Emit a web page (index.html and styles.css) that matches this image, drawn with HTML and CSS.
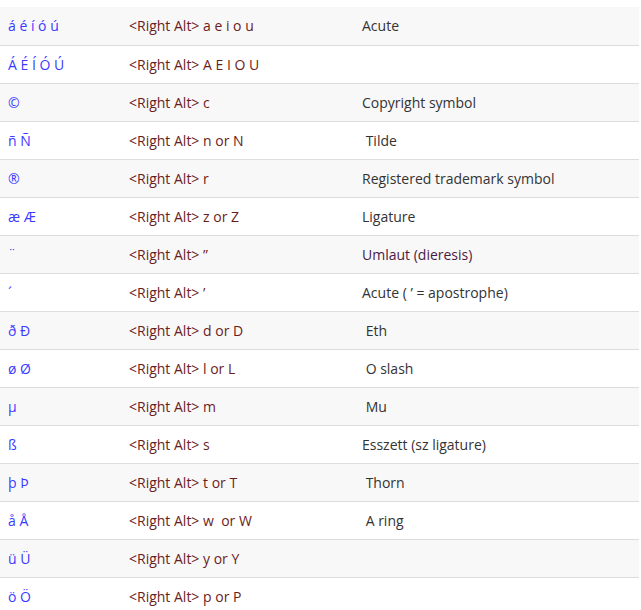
FILE: index.html
```html
<!DOCTYPE html>
<html>
<head>
<meta charset="utf-8">
<link rel="stylesheet" href="styles.css">
</head>
<body>
<div class="wrap">
<table class="keys">
<tbody>
<tr><td class="ch">á é í ó ú</td><td class="combo">&lt;Right Alt&gt; a e i o u</td><td class="desc">Acute</td></tr>
<tr><td class="ch">Á É Í Ó Ú</td><td class="combo">&lt;Right Alt&gt; A E I O U</td><td class="desc"></td></tr>
<tr><td class="ch">©</td><td class="combo">&lt;Right Alt&gt; c</td><td class="desc">Copyright symbol</td></tr>
<tr><td class="ch">ñ Ñ</td><td class="combo">&lt;Right Alt&gt; n or N</td><td class="desc"> Tilde</td></tr>
<tr><td class="ch">®</td><td class="combo">&lt;Right Alt&gt; r</td><td class="desc">Registered trademark symbol</td></tr>
<tr><td class="ch">æ Æ</td><td class="combo">&lt;Right Alt&gt; z or Z</td><td class="desc">Ligature</td></tr>
<tr><td class="ch">¨</td><td class="combo">&lt;Right Alt&gt; ”</td><td class="desc purple">Umlaut (dieresis)</td></tr>
<tr><td class="ch">´</td><td class="combo">&lt;Right Alt&gt; ’</td><td class="desc">Acute ( ’ = apostrophe)</td></tr>
<tr><td class="ch">ð Ð</td><td class="combo">&lt;Right Alt&gt; d or D</td><td class="desc"> Eth</td></tr>
<tr><td class="ch">ø Ø</td><td class="combo">&lt;Right Alt&gt; l or L</td><td class="desc"> O slash</td></tr>
<tr><td class="ch">µ</td><td class="combo">&lt;Right Alt&gt; m</td><td class="desc"> Mu</td></tr>
<tr><td class="ch">ß</td><td class="combo">&lt;Right Alt&gt; s</td><td class="desc">Esszett (sz ligature)</td></tr>
<tr><td class="ch">þ Þ</td><td class="combo">&lt;Right Alt&gt; t or T</td><td class="desc"> Thorn</td></tr>
<tr><td class="ch">å Å</td><td class="combo">&lt;Right Alt&gt; w  or W</td><td class="desc"> A ring</td></tr>
<tr><td class="ch">ü Ü</td><td class="combo">&lt;Right Alt&gt; y or Y</td><td class="desc"></td></tr>
<tr><td class="ch">ö Ö</td><td class="combo">&lt;Right Alt&gt; p or P</td><td class="desc"></td></tr>
</tbody>
</table>
</div>
</body>
</html>
```
FILE: styles.css
```css
html, body {
  margin: 0;
  padding: 0;
  background: #fff;
}
.wrap {
  padding-top: 7px;
}
.keys {
  border-collapse: collapse;
  width: 639px;
  table-layout: fixed;
  font-family: "Open Sans", "Liberation Sans", sans-serif;
  font-size: 14px;
  line-height: 20px;
}
.keys tr:nth-child(odd) {
  background: #f8f8f8;
}
.keys td {
  height: 38px;
  padding: 1px 8px 0 8px;
  border-bottom: 1px solid #dddddd;
  vertical-align: middle;
  white-space: pre;
  box-sizing: border-box;
}
.keys td.ch {
  width: 121px;
  color: #3b3bff;
}
.keys td.combo {
  width: 233px;
  color: #6b1c1c;
}
.keys td.desc {
  color: #333333;
}
.keys td.desc.purple {
  color: #4a1a46;
}
```
